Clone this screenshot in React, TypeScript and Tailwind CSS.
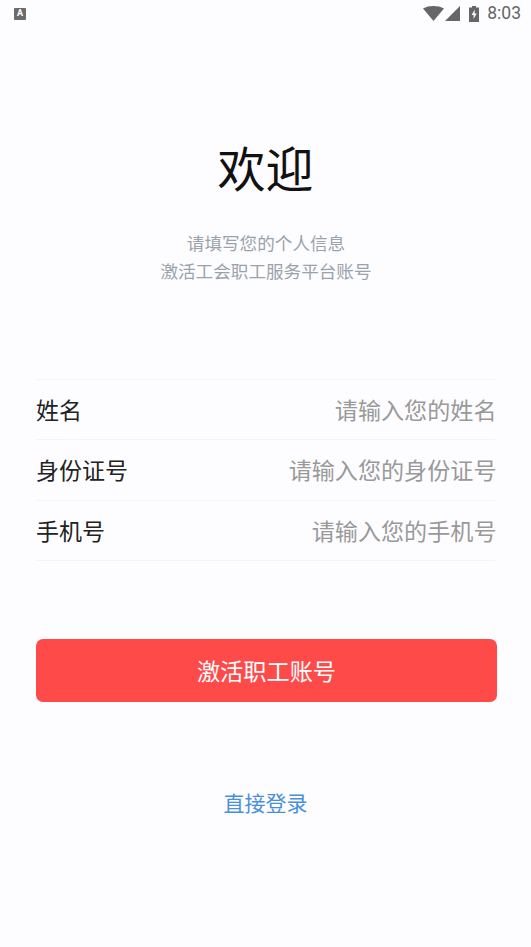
import React from 'react';

const fontStack = { fontFamily: '"Noto Sans CJK SC", "Noto Sans", sans-serif' };

const fields = [
  { label: '姓名', placeholder: '请输入您的姓名' },
  { label: '身份证号', placeholder: '请输入您的身份证号' },
  { label: '手机号', placeholder: '请输入您的手机号' },
];

function StatusBar() {
  return (
    <div className="flex h-[27px] items-center justify-between pl-[14px] pr-[10px]">
      <div className="flex h-[12px] w-[12px] items-center justify-center rounded-[1px] bg-[#6b6b6b]">
        <span className="text-[9px] leading-none font-bold text-white font-['Roboto']">A</span>
      </div>
      <div className="flex items-center text-[#666666]">
        <svg width="21" height="15" viewBox="0 0 21 15" fill="currentColor">
          <path d="M0 2.5C3 .8 6.5 0 10.5 0S18 .8 21 2.5L10.5 15z" />
        </svg>
        <svg className="ml-[1px]" width="15" height="15" viewBox="0 0 15 15" fill="currentColor">
          <path d="M15 0v15H0z" />
        </svg>
        <svg className="ml-[9px]" width="10" height="16" viewBox="0 0 10 16" fill="currentColor">
          <path fillRule="evenodd" d="M3 0h4v1.5h3V16H0V1.5h3zM5.8 3.5 2.6 9h2v4l3-5.6h-2z" />
        </svg>
        <span className="ml-[8px] text-[17.5px] leading-none text-[#666666] font-['Roboto']">8:03</span>
      </div>
    </div>
  );
}

export default function App() {
  return (
    <div className="min-h-[947px] bg-[#fdfdff]" style={fontStack}>
      <StatusBar />

      <div className="flex flex-col items-center pt-[107px]">
        <h1 className="text-[48px] leading-[64px] font-normal text-[#111111]">欢迎</h1>
        <p className="mt-[31px] pl-[1px] text-center text-[17.6px] leading-[27.5px] text-[#9aa3ab]">
          请填写您的个人信息
          <br />
          激活工会职工服务平台账号
        </p>
      </div>

      <div className="mx-[36px] mt-[95px] border-t border-[#f4f4f6]">
        {fields.map((field) => (
          <div
            key={field.label}
            className="flex h-[60.4px] items-center justify-between border-b border-[#f4f4f6] pb-[1px]"
          >
            <span className="text-[23px] text-[#222222]">{field.label}</span>
            <span className="-mr-[1.5px] text-[23.1px] text-[#999999]">{field.placeholder}</span>
          </div>
        ))}
      </div>

      <div className="ml-[36px] mr-[34px] mt-[78px]">
        <button className="flex h-[63px] w-full items-center justify-center rounded-[7px] bg-[#ff4a4a] text-[23.2px] text-white">
          激活职工账号
        </button>
      </div>

      <div className="mt-[85px] text-center text-[21px] leading-[30px] text-[#4a90d9]">直接登录</div>
    </div>
  );
}
